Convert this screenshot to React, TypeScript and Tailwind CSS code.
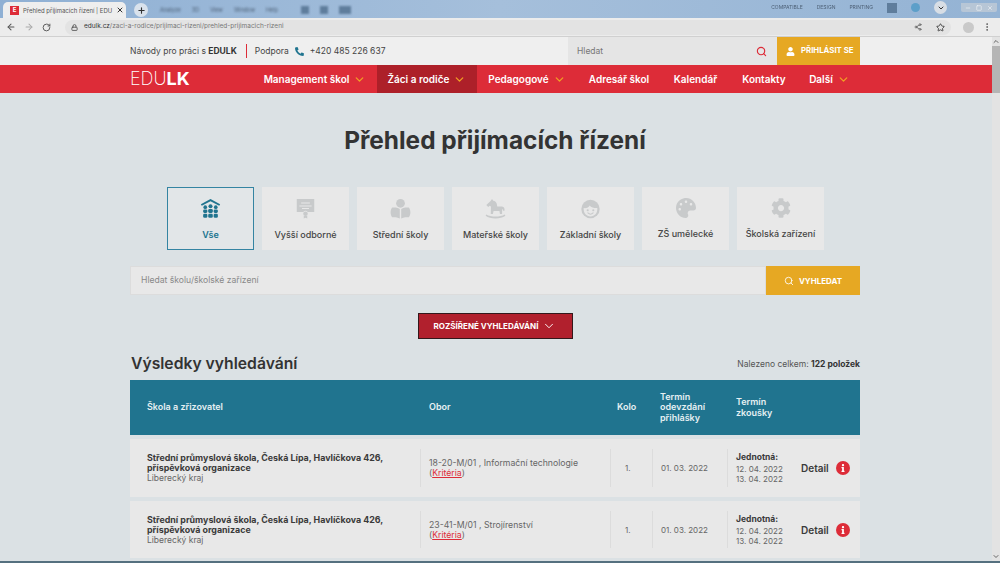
import { ChevronDown, Search, ArrowLeft, ArrowRight, RotateCw, Lock, Star, Plus, X, MoreVertical, Minus, Square, Share2, ChevronUp } from "lucide-react";
import { FaPhoneAlt, FaUser, FaPalette, FaCog, FaInfo } from "react-icons/fa";

function HomeIcon() {
  return (
    <svg viewBox="0 0 24 24" className="h-[21px] w-[21px]" fill="#20748f">
      <path d="M12 1 L23 7 L22 8.8 L12 3.6 L2 8.800 L1 7 Z" />
      <circle cx="6" cy="10.500" r="2.100" /><circle cx="12" cy="9.500" r="2.300" /><circle cx="18" cy="10.500" r="2.100" />
      <rect x="3.600" y="13.200" width="4.800" height="3.800" rx="1.500" /><rect x="9.400" y="12.500" width="5.200" height="4.500" rx="1.500" /><rect x="15.600" y="13.200" width="4.800" height="3.800" rx="1.500" />
      <rect x="3.600" y="18" width="4.800" height="4.500" rx="1.500" /><rect x="9.400" y="18" width="5.200" height="4.500" rx="1.500" /><rect x="15.600" y="18" width="4.800" height="4.500" rx="1.500" />
    </svg>
  );
}
function DiplomaIcon() {
  return (
    <svg viewBox="0 0 24 24" className="h-[21px] w-[21px]" fill="#c8cacb">
      <path fillRule="evenodd" d="M2 1h20v15h-7.500a3 3 0 0 0-5 0H2Z M7 5v1.400h10V5Z M5 8.500v1.200h14V8.500Z M8 11.500v1.200h8v-1.200Z" />
      <circle cx="12" cy="18" r="2.600" />
      <path d="M10 20.500h4v3l-2-1-2 1Z" />
    </svg>
  );
}
function ReaderIcon() {
  return (
    <svg viewBox="0 0 24 24" className="h-[21px] w-[21px]" fill="#c8cacb">
      <circle cx="12" cy="6" r="5" />
      <path d="M11.200 12.500c-3-1.800-6-2-8.700-1.600-1.200 1.600-1.800 3.600-1.800 5.600s.6 4 1.800 5.600c2.700-.4 5.700-.2 8.700 1.400Z" />
      <path d="M12.800 12.500c3-1.800 6-2 8.700-1.600 1.200 1.600 1.800 3.600 1.800 5.600s-.6 4-1.800 5.600c-2.700-.4-5.700-.2-8.700 1.400Z" />
    </svg>
  );
}
function HorseIcon() {
  return (
    <svg viewBox="0 0 24 24" className="h-[21px] w-[21px]" fill="#c8cacb">
      <path d="M8 1 9.500 3.200c2 .3 3.500 1.500 4 3.600l.5 3h5.200c1.600 0 3 1.300 3.100 3v1.700h-1.600l-.2-1.700-.9.200-.1 5.200h-2.400l-.6-3.300H9.800l-.8 3.300H6.600l.2-8.500-1.600-.9-1.500 1.500-2.200-2.200L6.400 3.400Z" />
      <path d="M1.500 18.800c5 3.200 16 3.200 21 0l.8 1.500c-5.500 4-17.100 4-22.600 0Z" />
    </svg>
  );
}
function ChildIcon() {
  return (
    <svg viewBox="0 0 24 24" className="h-[21px] w-[21px]">
      <circle cx="12" cy="12.500" r="10.500" fill="#c8cacb" />
      <path d="M4.200 11.500c3.500.4 5.500-.8 6.800-3 2 2.200 5 3.200 8.800 3 .5 6-3.200 9.500-7.800 9.500s-8.300-3.500-7.800-9.500Z" fill="#e8e8e8" />
      <circle cx="8.800" cy="14" r="1.200" fill="#c8cacb" /><circle cx="15.200" cy="14" r="1.200" fill="#c8cacb" />
      <path d="M9 17c1.800 1.800 4.200 1.800 6 0" fill="none" stroke="#c8cacb" strokeWidth="1.200" strokeLinecap="round" />
    </svg>
  );
}

const tiles = [
  { label: "Vyšší odborné", icon: <DiplomaIcon /> },
  { label: "Střední školy", icon: <ReaderIcon /> },
  { label: "Mateřské školy", icon: <HorseIcon /> },
  { label: "Základní školy", icon: <ChildIcon /> },
  { label: "ZŠ umělecké", icon: <FaPalette className="h-[20px] w-[20px] text-[#c8cacb]" /> },
  { label: "Školská zařízení", icon: <FaCog className="h-[20px] w-[20px] text-[#c8cacb]" /> },
];

const navItems = [
  { label: "Management škol", chev: true, w: "w-[124px]" },
  { label: "Žáci a rodiče", chev: true, active: true, w: "w-[100px]" },
  { label: "Pedagogové", chev: true, w: "w-[100px]" },
  { label: "Adresář škol", w: "w-[84px]" },
  { label: "Kalendář", w: "w-[69px]" },
  { label: "Kontakty", w: "w-[68px]" },
  { label: "Další", chev: true, w: "w-[63px]" },
];

const rows = [
  { code: "18-20-M/01 , Informační technologie", h: "h-[58px]" },
  { code: "23-41-M/01 , Strojírenství", h: "h-[57px]" },
];

export default function App() {
  return (
    <div className="flex h-[563px] w-[1000px] flex-col overflow-hidden bg-[#dbe1e4] font-['Inter','Liberation_Sans',sans-serif] text-[#3a3a3a]">
      {/* Tab strip */}
      <div className="flex h-[18px] shrink-0 items-end bg-gradient-to-r from-[#8fb0d4] via-[#a5bfdb] to-[#94b3d4] pl-[3px]">
        <div className="flex h-[16px] w-[123px] items-center gap-[4px] rounded-t-[5px] bg-[#eeeeee] px-[7px]">
          <span className="flex h-[9px] w-[9px] shrink-0 items-center justify-center bg-[#dd2c38] text-[6px] font-bold leading-none text-white">E</span>
          <span className="w-[90px] whitespace-nowrap text-[6px] text-[#555]">Přehled přijímacích řízení | EDU</span>
          <X className="h-[8px] w-[8px] shrink-0 text-[#333]" strokeWidth={3} />
        </div>
        <div className="mb-[1px] ml-[8px] flex h-[14px] w-[14px] items-center justify-center rounded-full bg-[#d9e2ec]">
          <Plus className="h-[9px] w-[9px] text-[#333]" strokeWidth={3} />
        </div>
        <div className="mb-[4px] ml-[12px] flex items-center gap-[11px] blur-[0.8px]">
          <span className="text-[5.5px] text-[#4d6076]">Analyze</span>
          <span className="text-[5.5px] text-[#4d6076]">3D</span>
          <span className="text-[5.5px] text-[#4d6076]">View</span>
          <span className="text-[5.5px] text-[#4d6076]">Window</span>
          <span className="text-[5.5px] text-[#4d6076]">Help</span>
          <span className="ml-[12px] h-[8px] w-[8px] bg-[#5f7d9c]" />
          <span className="h-[8px] w-[8px] bg-[#5f7d9c]" />
          <span className="h-[8px] w-[12px] bg-[#5f7d9c]" />
        </div>
        <div className="mb-[4px] ml-auto flex items-center gap-[14px] pr-[3px] blur-[0.5px]">
          <span className="text-[5px] text-[#4d6076]">COMPATIBLE</span>
          <span className="text-[5px] text-[#4d6076]">DESIGN</span>
          <span className="text-[5px] text-[#4d6076]">PRINTING</span>
          <span className="h-[10px] w-[10px] bg-[#5f7d9c]" />
          <span className="h-[9px] w-[9px] rounded-full bg-[#5d9fc9]" />
          <span className="flex h-[13px] w-[13px] items-center justify-center rounded-full bg-[#d8dee5]">
            <ChevronDown className="h-[8px] w-[8px] text-[#333]" strokeWidth={3} />
          </span>
          <div className="flex h-[9px] items-center gap-[5px] rounded-b-[2px] bg-[#b7c6d6] px-[4px]">
            <Minus className="h-[6px] w-[6px] text-white" />
            <Square className="h-[6px] w-[6px] text-white" />
            <X className="h-[6px] w-[6px] text-white" />
          </div>
        </div>
      </div>
      {/* Toolbar */}
      <div className="flex h-[19px] shrink-0 items-center gap-[8px] border-b border-[#d0d0d0] bg-[#ececec] pl-[6px] pr-[8px]">
        <ArrowLeft className="h-[10px] w-[10px] text-[#555]" strokeWidth={2.5} />
        <ArrowRight className="h-[10px] w-[10px] text-[#aaa]" strokeWidth={2.5} />
        <RotateCw className="h-[9px] w-[9px] text-[#555]" strokeWidth={2.5} />
        <div className="ml-[6px] flex h-[15px] flex-1 items-center gap-[6px] rounded-full bg-[#e3e3e3] pl-[6px] pr-[6px]">
          <Lock className="h-[7px] w-[7px] text-[#555]" strokeWidth={3} />
          <span className="text-[6.5px] text-[#777]"><span className="text-[#333]">edulk.cz</span>/zaci-a-rodice/prijimaci-rizeni/prehled-prijimacich-rizeni</span>
          <Share2 className="ml-auto h-[8px] w-[8px] text-[#555]" />
          <Star className="ml-[8px] h-[9px] w-[9px] text-[#444]" strokeWidth={2.5} />
        </div>
        <span className="ml-[4px] h-[11px] w-[11px] rounded-full bg-[#c9c9c9]" />
        <MoreVertical className="h-[10px] w-[10px] text-[#555]" />
      </div>

      <div className="flex min-h-0 flex-1">
        <div className="min-w-0 flex-1">
          {/* Top bar */}
          <div className="h-[28px] bg-[#efefef]">
            <div className="flex h-full items-center pl-[130px]">
              <span className="text-[8.5px] text-[#444]">Návody pro práci s <b className="font-bold text-[#333]">EDULK</b></span>
              <span className="ml-[9px] h-[14px] w-px bg-[#dd2c38]" />
              <span className="ml-[8px] text-[8.5px] text-[#444]">Podpora</span>
              <FaPhoneAlt className="ml-[6px] h-[9px] w-[9px] text-[#20748f]" />
              <span className="ml-[6px] text-[8.5px] text-[#444]">+420 485 226 637</span>
              <div className="ml-auto mr-[132px] flex h-full">
                <div className="flex h-full w-[209px] items-center justify-between bg-[#e5e5e5] pl-[9px] pr-[10px]">
                  <span className="text-[8.5px] text-[#777]">Hledat</span>
                  <Search className="h-[11px] w-[11px] text-[#dd2c38]" strokeWidth={2.5} />
                </div>
                <div className="flex h-full w-[83px] items-center gap-[6px] bg-[#e6a823] pl-[9px]">
                  <FaUser className="h-[9px] w-[9px] text-white" />
                  <span className="whitespace-nowrap text-[7.8px] font-bold text-white">PŘIHLÁSIT SE</span>
                </div>
              </div>
            </div>
          </div>
          {/* Nav */}
          <div className="flex h-[28px] items-stretch bg-[#dd2c38] pl-[130px]">
            <span className="w-[123px] self-center text-[18px] font-extralight leading-none text-white">EDU<b className="font-bold">LK</b></span>
            {navItems.map((n) => (
              <div key={n.label} className={`flex ${n.w} items-center justify-center gap-[4px] whitespace-nowrap text-[10px] font-semibold text-white ${n.active ? "bg-[#ad2029]" : ""}`}>
                {n.label}
                {n.chev && <ChevronDown className="h-[13px] w-[13px] text-[#f0a024]" strokeWidth={2.4} />}
              </div>
            ))}
          </div>

          {/* Main */}
          <div className="ml-[130px] flex w-[730px] flex-col pt-[33px]">
            <h1 className="text-center text-[24.4px] font-bold leading-[28px] text-[#333]">Přehled přijímacích řízení</h1>
            <div className="mt-[33px] flex gap-[8px] pl-[37px]">
              <div className="flex h-[63px] w-[87px] flex-col items-center justify-center gap-[9px] border border-[#3484a2] bg-[#e2e6e8] pt-[2px]">
                <HomeIcon />
                <span className="text-[9px] font-semibold text-[#20748f]">Vše</span>
              </div>
              {tiles.map((t) => (
                <div key={t.label} className="flex h-[63px] w-[87px] flex-col items-center justify-center gap-[9px] bg-[#e8e8e8] pt-[2px]">
                  {t.icon}
                  <span className="whitespace-nowrap text-[9px] font-medium text-[#444]">{t.label}</span>
                </div>
              ))}
            </div>
            <div className="mt-[16px] flex h-[29px]">
              <div className="flex flex-1 items-center border border-[#dcdcdc] bg-[#e8e8e8] pl-[10px] text-[8.6px] text-[#888]">Hledat školu/školské zařízení</div>
              <div className="flex w-[94px] items-center justify-center gap-[5px] bg-[#e6a823] text-[8px] font-bold text-white">
                <Search className="h-[10px] w-[10px]" strokeWidth={2} />
                VYHLEDAT
              </div>
            </div>
            <div className="mt-[18px] flex justify-center">
              <div className="flex h-[26px] w-[155px] items-center justify-center gap-[4px] border border-[#33181b] bg-[#b1202d] text-[8px] font-bold text-white">
                ROZŠÍŘENÉ VYHLEDÁVÁNÍ
                <ChevronDown className="h-[14px] w-[14px]" strokeWidth={1.6} />
              </div>
            </div>
            <div className="mt-[14px] flex h-[22px] items-center justify-between">
              <h2 className="pl-px text-[15.7px] font-semibold text-[#333]">Výsledky vyhledávání</h2>
              <span className="text-[8.5px] text-[#555]">Nalezeno celkem: <b className="font-bold text-[#333]">122 položek</b></span>
            </div>
            <div className="mt-[5px] grid h-[55px] grid-cols-[290px_190px_42px_75px_133px] items-center bg-[#20748f] text-[9px] font-semibold leading-[10.5px] text-[#e6f0f3]">
              <span className="pl-[17px]">Škola a zřizovatel</span>
              <span className="pl-[9px]">Obor</span>
              <span className="pl-[7px]">Kolo</span>
              <span className="pl-[8px]">Termín<br />odevzdání<br />přihlášky</span>
              <span className="pl-[9px]">Termín<br />zkoušky</span>
            </div>
            <div className="mt-[4px] flex flex-col gap-[4px]">
              {rows.map((r) => (
                <div key={r.code} className={`grid ${r.h} grid-cols-[290px_190px_42px_75px_133px] items-stretch bg-[#e8e8e8] py-[10px] text-[8.7px] leading-[10px] text-[#666]`}>
                  <div className="flex flex-col justify-center pl-[17px]">
                    <span className="text-[8.9px] font-bold text-[#3a3a3a]">Střední průmyslová škola, Česká Lípa, Havlíčkova 426,<br />příspěvková organizace</span>
                    <span className="text-[8.5px]">Liberecký kraj</span>
                  </div>
                  <div className="flex flex-col justify-center border-l border-[#dcdcdc] pl-[8px]">
                    <span>{r.code}</span>
                    <span>(<span className="text-[#dd2c38] underline">Kritéria</span>)</span>
                  </div>
                  <div className="flex items-center border-l border-[#dcdcdc] pl-[14px] text-[8px]">1.</div>
                  <div className="flex items-center border-l border-[#dcdcdc] pl-[8px] text-[8px]">01. 03. 2022</div>
                  <div className="flex items-center border-l border-[#dcdcdc] pl-[8px]">
                    <div className="flex w-[65px] flex-col text-[8px]">
                      <span className="mb-[2px] text-[8.500px] font-bold text-[#3a3a3a]">Jednotná:</span>
                      <span>12. 04. 2022</span>
                      <span>13. 04. 2022</span>
                    </div>
                    <span className="text-[10px] font-semibold text-[#3a3a3a]">Detail</span>
                    <span className="ml-[7px] flex h-[14px] w-[14px] items-center justify-center rounded-full bg-[#dd2c38]">
                      <FaInfo className="h-[8px] w-[8px] text-white" />
                    </span>
                  </div>
                </div>
              ))}
            </div>
          </div>
        </div>
        {/* Scrollbar */}
        <div className="flex w-[8px] shrink-0 flex-col items-center bg-[#e3e3e3]">
          <ChevronUp className="h-[9px] w-[8px] text-[#666]" strokeWidth={3} />
          <div className="h-[47px] w-full bg-[#b5b5b5]" />
          <ChevronDown className="mt-auto h-[9px] w-[8px] text-[#666]" strokeWidth={3} />
        </div>
      </div>
      <div className="h-[2px] shrink-0 bg-[#55707f]" />
    </div>
  );
}
